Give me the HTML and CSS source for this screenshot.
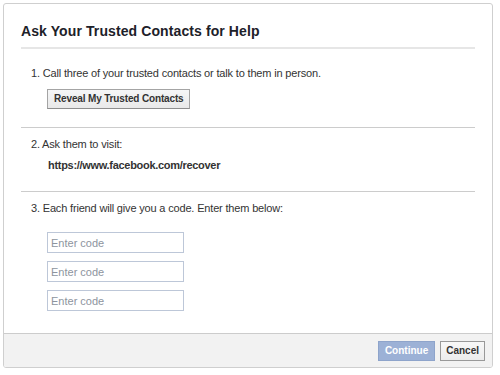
FILE: index.html
```html
<!DOCTYPE html>
<html>
<head>
<meta charset="utf-8">
<link rel="stylesheet" href="styles.css">
</head>
<body>
<div class="dialog">
  <div class="content">
    <h2 class="title">Ask Your Trusted Contacts for Help</h2>
    <div class="step first">
      <p class="step-text">1. Call three of your trusted contacts or talk to them in person.</p>
      <button class="btn reveal">Reveal My Trusted Contacts</button>
    </div>
    <div class="step">
      <p class="step-text">2. Ask them to visit:</p>
      <p class="url">https://www.facebook.com/recover</p>
    </div>
    <div class="step last">
      <p class="step-text">3. Each friend will give you a code. Enter them below:</p>
      <div class="codes">
        <input class="code" type="text" placeholder="Enter code">
        <input class="code" type="text" placeholder="Enter code">
        <input class="code" type="text" placeholder="Enter code">
      </div>
    </div>
  </div>
  <div class="footer">
    <button class="btn primary">Continue</button>
    <button class="btn cancel">Cancel</button>
  </div>
</div>
</body>
</html>
```
FILE: styles.css
```css
html, body {
  margin: 0;
  padding: 0;
  background: #ffffff;
}
body {
  font-family: "Liberation Sans", Arial, sans-serif;
  color: #333333;
}
.dialog {
  margin: 3px 0 0 3px;
  width: 488px;
  border: 1px solid #cfcfcf;
  border-radius: 3px;
  background: #ffffff;
  overflow: hidden;
}
.content {
  padding: 0 17px;
}
.title {
  margin: 0;
  padding: 18px 0 7px 0;
  font-size: 14px;
  line-height: 18px;
  font-weight: bold;
  letter-spacing: 0.1px;
  color: #1d2129;
  border-bottom: 2px solid #e6e6e6;
}
.step {
  padding: 8px 0 18px 0;
  border-bottom: 1px solid #cccccc;
}
.step.first {
  padding-top: 16px;
}
.step.last {
  border-bottom: none;
  padding-bottom: 22px;
}
.step-text {
  margin: 0;
  padding-left: 10px;
  font-size: 11px;
  line-height: 16px;
  letter-spacing: -0.17px;
  color: #333333;
}
.url {
  margin: 5px 0 0 27px;
  font-size: 11px;
  line-height: 16px;
  font-weight: bold;
  letter-spacing: -0.3px;
  color: #333333;
}
.btn {
  font-family: "Liberation Sans", Arial, sans-serif;
  font-size: 10px;
  font-weight: bold;
  height: 20px;
  line-height: 18px;
  box-sizing: border-box;
  border-radius: 0;
  cursor: pointer;
}
.reveal {
  display: block;
  margin: 8px 0 0 26px;
  padding: 0 6px;
  letter-spacing: -0.15px;
  color: #333333;
  background: linear-gradient(#f5f6f7, #e9e9e9);
  border: 1px solid #a4a4a4;
  border-bottom-color: #8e8e8e;
}
.codes {
  margin: 16px 0 0 26px;
  display: flex;
  flex-direction: column;
  gap: 8px;
}
.code {
  width: 137px;
  height: 21px;
  box-sizing: border-box;
  margin: 0;
  padding: 0 3px;
  border: 1px solid #bdc7d8;
  font-family: "Liberation Sans", Arial, sans-serif;
  font-size: 11px;
  color: #333333;
  outline: none;
}
.code::placeholder {
  color: #8d949e;
}
.footer {
  border-top: 1px solid #cccccc;
  background: #f2f2f2;
  padding: 7px 7px 6px 0;
  display: flex;
  justify-content: flex-end;
  gap: 5px;
}
.primary {
  padding: 0 6px;
  color: #ffffff;
  background: #9cb1d6;
  border: 1px solid #8ea4cb;
}
.cancel {
  padding: 0 5px;
  color: #333333;
  background: linear-gradient(#f8f8f8, #ececec);
  border: 1px solid #999999;
}
```
